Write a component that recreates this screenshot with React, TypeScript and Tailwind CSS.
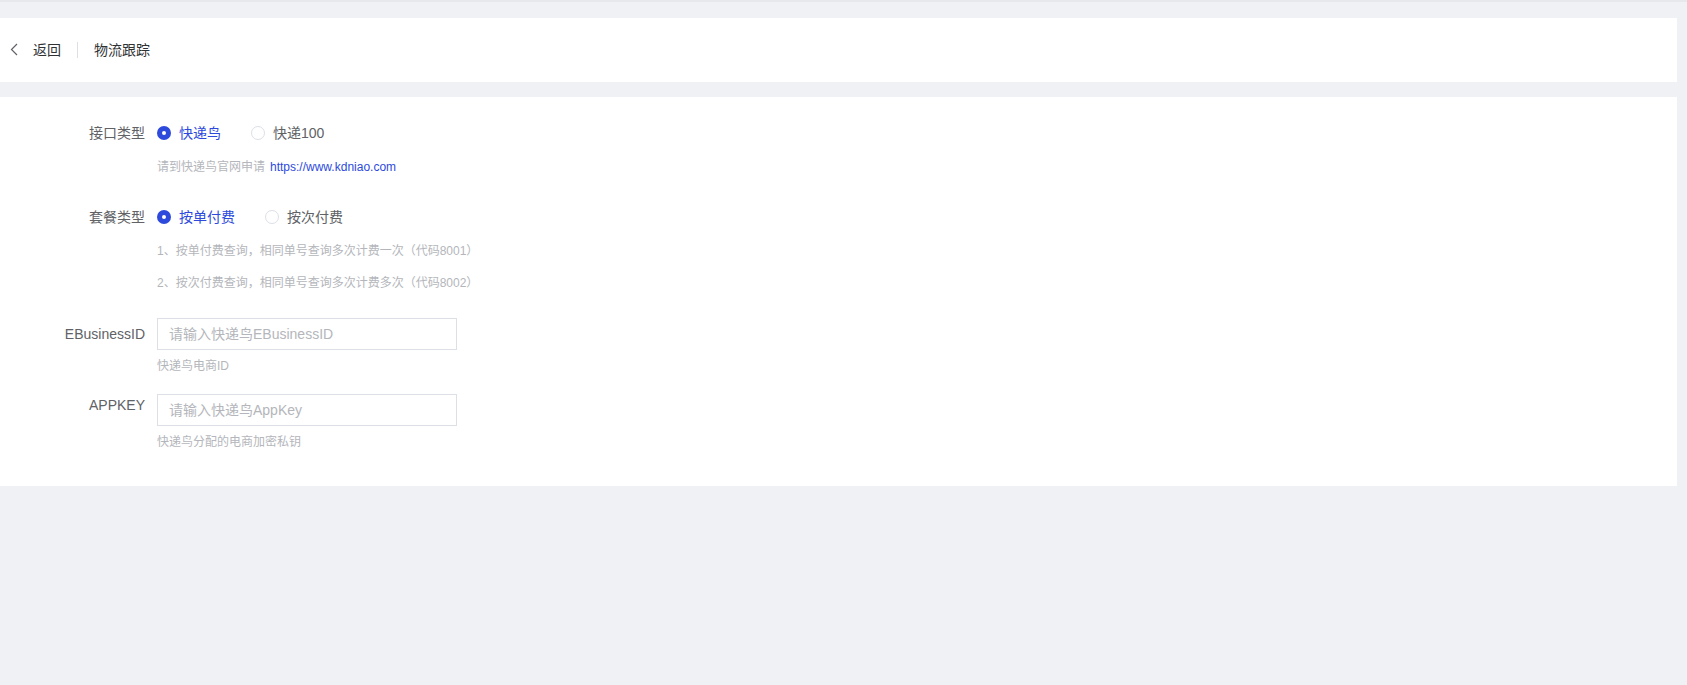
const font = "font-['Liberation_Sans','Noto_Sans_CJK_SC',sans-serif]";

const Radio = ({ checked, label }: { checked: boolean; label: string }) => (
  <label className="flex items-center mr-[30px] cursor-pointer">
    {checked ? (
      <span className="w-[14px] h-[14px] rounded-full bg-[#2d4add] flex items-center justify-center">
        <span className="w-[4px] h-[4px] rounded-full bg-white" />
      </span>
    ) : (
      <span className="w-[14px] h-[14px] rounded-full border border-[#dcdfe6] bg-white" />
    )}
    <span className={"ml-2 text-[14px] leading-5 " + (checked ? "text-[#2d4add]" : "text-[#606266]")}>
      {label}
    </span>
  </label>
);

const Hint = ({ children, className = "" }: { children: React.ReactNode; className?: string }) => (
  <div className={"flex " + className}>
    <div className="w-[157px] shrink-0" />
    <div className="text-[12px] leading-[18px] text-[#b4b6bb]">{children}</div>
  </div>
);

export default function App() {
  return (
    <main className={"w-full min-h-screen bg-[#f0f1f4] " + font}>
      <div className="h-[2px] bg-[#e7e8ec]" />
      {/* 헤더 */}
      <header className="mt-4 mr-[10px] h-16 bg-white flex items-center pl-[10px]">
        <svg width="8" height="13" viewBox="0 0 8 13" fill="none" className="mt-[-1px]">
          <path d="M7 1L1.5 6.5L7 12" stroke="#606266" strokeWidth="1.2" />
        </svg>
        <span className="ml-[15px] text-[14px] text-[#303133]">返回</span>
        <span className="ml-4 w-px h-4 bg-[#dcdfe6]" />
        <span className="ml-4 text-[14px] text-[#303133]">物流跟踪</span>
      </header>

      {/* 폼 영역 */}
      <section className="mt-[15px] mr-[10px] bg-white pt-[26px] pb-[35px]">
        <div className="flex items-center">
          <div className="w-[145px] text-right text-[14px] leading-5 text-[#606266]">接口类型</div>
          <div className="ml-3 flex items-center">
            <Radio checked label="快递鸟" />
            <Radio checked={false} label="快递100" />
          </div>
        </div>
        <Hint className="mt-[15px]">
          请到快递鸟官网申请
          <span className="ml-[5px] text-[#2d4add]">https://www.kdniao.com</span>
        </Hint>

        <div className="flex items-center mt-[31px]">
          <div className="w-[145px] text-right text-[14px] leading-5 text-[#606266]">套餐类型</div>
          <div className="ml-3 flex items-center">
            <Radio checked label="按单付费" />
            <Radio checked={false} label="按次付费" />
          </div>
        </div>
        <Hint className="mt-[15px]">1、按单付费查询，相同单号查询多次计费一次（代码8001）</Hint>
        <Hint className="mt-[14px]">2、按次付费查询，相同单号查询多次计费多次（代码8002）</Hint>

        <div className="flex items-center mt-[26px]">
          <div className="w-[145px] text-right text-[14px] leading-5 text-[#606266]">EBusinessID</div>
          <input
            className="ml-3 w-[300px] h-8 border border-[#dcdfe6] px-[11px] text-[14px] outline-none placeholder:text-[#b4b6bb]"
            placeholder="请输入快递鸟EBusinessID"
          />
        </div>
        <Hint className="mt-[7px]">快递鸟电商ID</Hint>

        <div className="flex items-center mt-[19px]">
          <div className="w-[145px] text-right text-[14px] leading-5 text-[#606266] self-start mt-[1px]">APPKEY</div>
          <input
            className="ml-3 w-[300px] h-8 border border-[#dcdfe6] px-[11px] text-[14px] outline-none placeholder:text-[#b4b6bb]"
            placeholder="请输入快递鸟AppKey"
          />
        </div>
        <Hint className="mt-[7px]">快递鸟分配的电商加密私钥</Hint>
      </section>
    </main>
  );
}
